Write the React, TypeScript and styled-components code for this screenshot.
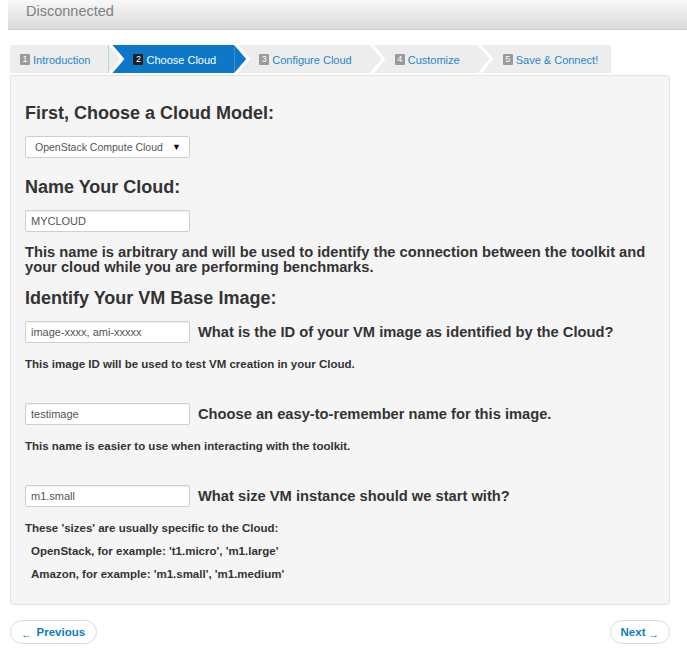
import React from 'react';
import styled, { createGlobalStyle } from 'styled-components';

const GlobalStyle = createGlobalStyle`
  html, body { margin: 0; padding: 0; background: #fff; }
  body { font-family: "Liberation Sans", Arial, sans-serif; color: #333; }
  *, *::before, *::after { box-sizing: border-box; }
`;

const Header = styled.header`
  margin-left: 8px;
  height: 30px;
  padding: 0 0 0 18px;
  background: linear-gradient(#f8f8f8, #dadada);
  border-bottom: 1px solid #d0d0d0;
  font-size: 14.5px;
  line-height: 22px;
  color: #808080;
`;

const Main = styled.main`
  width: 660px;
  margin: 15px 0 0 10px;
`;

const Steps = styled.ol`
  display: flex;
  width: max-content;
  list-style: none;
  margin: 0;
  padding: 0;
  height: 28px;
  background: #ededed;
  border-radius: 3px 3px 0 0;
`;

const Step = styled.li<{ $active?: boolean }>`
  position: relative;
  display: flex;
  align-items: center;
  gap: 3px;
  height: 28px;
  padding: 1px 18px 0 25px;
  background: ${(p) => (p.$active ? '#0d77c8' : 'transparent')};
  color: ${(p) => (p.$active ? '#fff' : '#1f87c9')};
  font-size: 11px;
  white-space: nowrap;

  &:first-child {
    padding-left: 10px;
    border-top-left-radius: 3px;
  }
  &:last-child {
    padding-right: 13px;
  }
  &:not(:last-child)::after {
    content: '';
    position: absolute;
    top: 0;
    left: 100%;
    width: 16px;
    height: 100%;
    background: #fff;
    clip-path: polygon(0 0, 4px 0, 100% 50%, 4px 100%, 0 100%);
    z-index: 1;
  }
  &:not(:last-child)::before {
    content: '';
    position: absolute;
    top: 0;
    left: 100%;
    width: 12px;
    height: 100%;
    background: ${(p) => (p.$active ? '#0d77c8' : '#ededed')};
    clip-path: polygon(0 0, 100% 50%, 0 100%);
    z-index: 2;
  }
`;

const Badge = styled.span<{ $active?: boolean }>`
  display: inline-flex;
  align-items: center;
  justify-content: center;
  width: 10px;
  height: 11px;
  border-radius: 1px;
  background: ${(p) => (p.$active ? '#1e1e1e' : '#9a9a9a')};
  color: #fff;
  font-size: 9px;
  line-height: 11px;
`;

const Panel = styled.section`
  margin-top: 2px;
  background: #f5f5f5;
  border: 1px solid #e3e3e3;
  border-radius: 0 4px 4px 4px;
  padding: 27px 15px 22px 14px;
`;

const Heading = styled.h3<{ $top?: number }>`
  margin: ${(p) => p.$top ?? 0}px 0 13px;
  font-size: 18px;
  line-height: 20px;
  font-weight: bold;
  color: #333;
`;

const SelectBox = styled.div`
  display: flex;
  align-items: center;
  justify-content: space-between;
  width: 165px;
  height: 22px;
  padding: 0 8px 0 9px;
  background: #fff;
  border: 1px solid #cfcfcf;
  border-radius: 2px;
  font-size: 10.5px;
  color: #555;
`;

const Caret = styled.span`
  font-size: 9px;
  color: #111;
`;

const TextInput = styled.input`
  width: 165px;
  height: 22px;
  padding: 0 5px;
  margin: 0;
  background: #fff;
  border: 1px solid #cfcfcf;
  border-radius: 2px;
  box-shadow: inset 0 1px 1px rgba(0, 0, 0, 0.06);
  font-family: "Liberation Sans", Arial, sans-serif;
  font-size: 11px;
  color: #555;
  outline: none;
`;

const Lead = styled.p`
  margin: 13px 0 13px;
  font-size: 14.7px;
  line-height: 15px;
  font-weight: bold;
  color: #333;
`;

const Field = styled.div`
  margin-bottom: 31px;
  &:last-of-type { margin-bottom: 0; }
`;

const FieldRow = styled.div`
  display: flex;
  align-items: center;
  gap: 8px;
`;

const FieldLabel = styled.label`
  font-size: 14.7px;
  font-weight: bold;
  color: #333;
`;

const Help = styled.p<{ $indent?: boolean; $top?: number }>`
  margin: ${(p) => p.$top ?? 13}px 0 0;
  padding-left: ${(p) => (p.$indent ? 6 : 0)}px;
  font-size: 11.5px;
  line-height: 16px;
  font-weight: bold;
  color: #333;
`;

const Pager = styled.nav`
  display: flex;
  justify-content: space-between;
  margin-top: 15px;
`;

const PagerButton = styled.a<{ $next?: boolean }>`
  display: inline-flex;
  align-items: center;
  gap: ${(p) => (p.$next ? 3 : 5)}px;
  height: 24px;
  padding: ${(p) => (p.$next ? '0 10px 0 10px' : '0 11px 0 10px')};
  background: #fff;
  border: 1px solid #dcdcdc;
  border-radius: 12px;
  color: #0b7cc1;
  font-size: 11.5px;
  font-weight: bold;
  text-decoration: none;
  cursor: pointer;
`;

const Arrow = styled.span`
  font-size: 10.5px;
  padding-top: 3px;
`;

const steps = ['Introduction', 'Choose Cloud', 'Configure Cloud', 'Customize', 'Save & Connect!'];

export default function App() {
  return (
    <>
      <GlobalStyle />
      <Header>Disconnected</Header>
      <Main>
        <Steps>
          {steps.map((s, i) => (
            <Step key={s} $active={i === 1}>
              <Badge $active={i === 1}>{i + 1}</Badge>
              {s}
            </Step>
          ))}
        </Steps>
        <Panel>
          <Heading>First, Choose a Cloud Model:</Heading>
          <SelectBox>
            <span>OpenStack Compute Cloud</span>
            <Caret>▼</Caret>
          </SelectBox>
          <Heading $top={19}>Name Your Cloud:</Heading>
          <TextInput defaultValue="MYCLOUD" />
          <Lead>
            This name is arbitrary and will be used to identify the connection between the toolkit and
            your cloud while you are performing benchmarks.
          </Lead>
          <Heading>Identify Your VM Base Image:</Heading>
          <Field>
            <FieldRow>
              <TextInput defaultValue="image-xxxx, ami-xxxxx" />
              <FieldLabel>What is the ID of your VM image as identified by the Cloud?</FieldLabel>
            </FieldRow>
            <Help>This image ID will be used to test VM creation in your Cloud.</Help>
          </Field>
          <Field>
            <FieldRow>
              <TextInput defaultValue="testimage" />
              <FieldLabel>Choose an easy-to-remember name for this image.</FieldLabel>
            </FieldRow>
            <Help>This name is easier to use when interacting with the toolkit.</Help>
          </Field>
          <Field>
            <FieldRow>
              <TextInput defaultValue="m1.small" />
              <FieldLabel>What size VM instance should we start with?</FieldLabel>
            </FieldRow>
            <Help $top={13}>These 'sizes' are usually specific to the Cloud:</Help>
            <Help $indent $top={7}>OpenStack, for example: 't1.micro', 'm1.large'</Help>
            <Help $indent $top={7}>Amazon, for example: 'm1.small', 'm1.medium'</Help>
          </Field>
        </Panel>
        <Pager>
          <PagerButton>
            <Arrow>←</Arrow>
            Previous
          </PagerButton>
          <PagerButton $next>
            Next
            <Arrow>→</Arrow>
          </PagerButton>
        </Pager>
      </Main>
    </>
  );
}
